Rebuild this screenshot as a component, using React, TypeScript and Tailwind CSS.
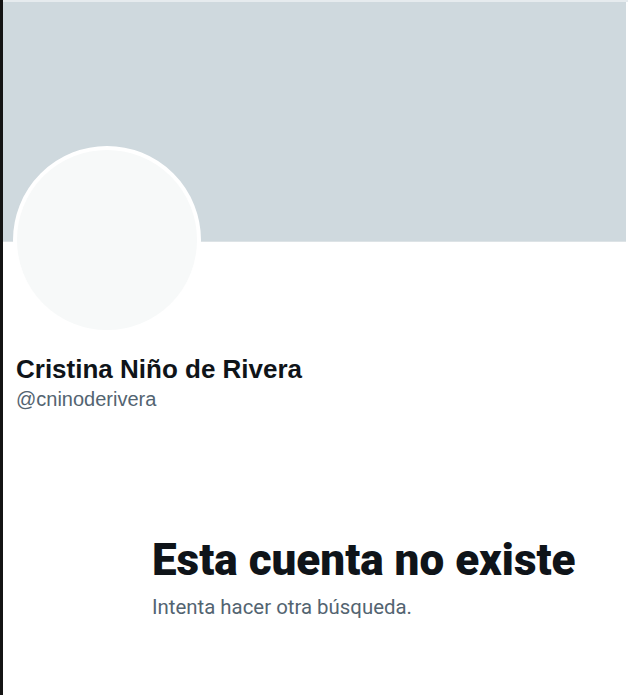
export default function App() {
  return (
    <div className="w-[628px] h-[695px] bg-white flex overflow-hidden" style={{ fontFamily: '"Liberation Sans", Arial, sans-serif' }}>
      <div className="w-[3px] h-full bg-[#141414] shrink-0" />
      <div className="flex-1 flex flex-col">
        <div className="h-[2px] bg-[#e6ebee]" />
        <div className="h-[240px] bg-[#cfd9de] mr-[2px] border-b border-[#dde3e6]" />
        <div className="ml-[10px] -mt-[96px] w-[188px] h-[188px] rounded-full bg-[#f7f9f9] border-[4px] border-white" />
        <div className="ml-[13px] mt-[20px] text-[26px] leading-[30px] font-bold text-[#0f1419]">
          Cristina Niño de Rivera
        </div>
        <div className="ml-[13px] mt-[3px] text-[20px] leading-[24px] text-[#536471]">
          @cninoderivera
        </div>
        <div className="ml-[149px] mt-[123px] flex flex-col">
          <div className="text-[44px] leading-[52px] font-black text-[#0f1419]" style={{ fontFamily: 'Roboto, "Liberation Sans", sans-serif' }}>
            Esta cuenta no existe
          </div>
          <div className="mt-[9px] text-[20.4px] leading-[24px] text-[#536471]" style={{ fontFamily: 'Roboto, "Liberation Sans", sans-serif' }}>
            Intenta hacer otra búsqueda.
          </div>
        </div>
      </div>
    </div>
  );
}
